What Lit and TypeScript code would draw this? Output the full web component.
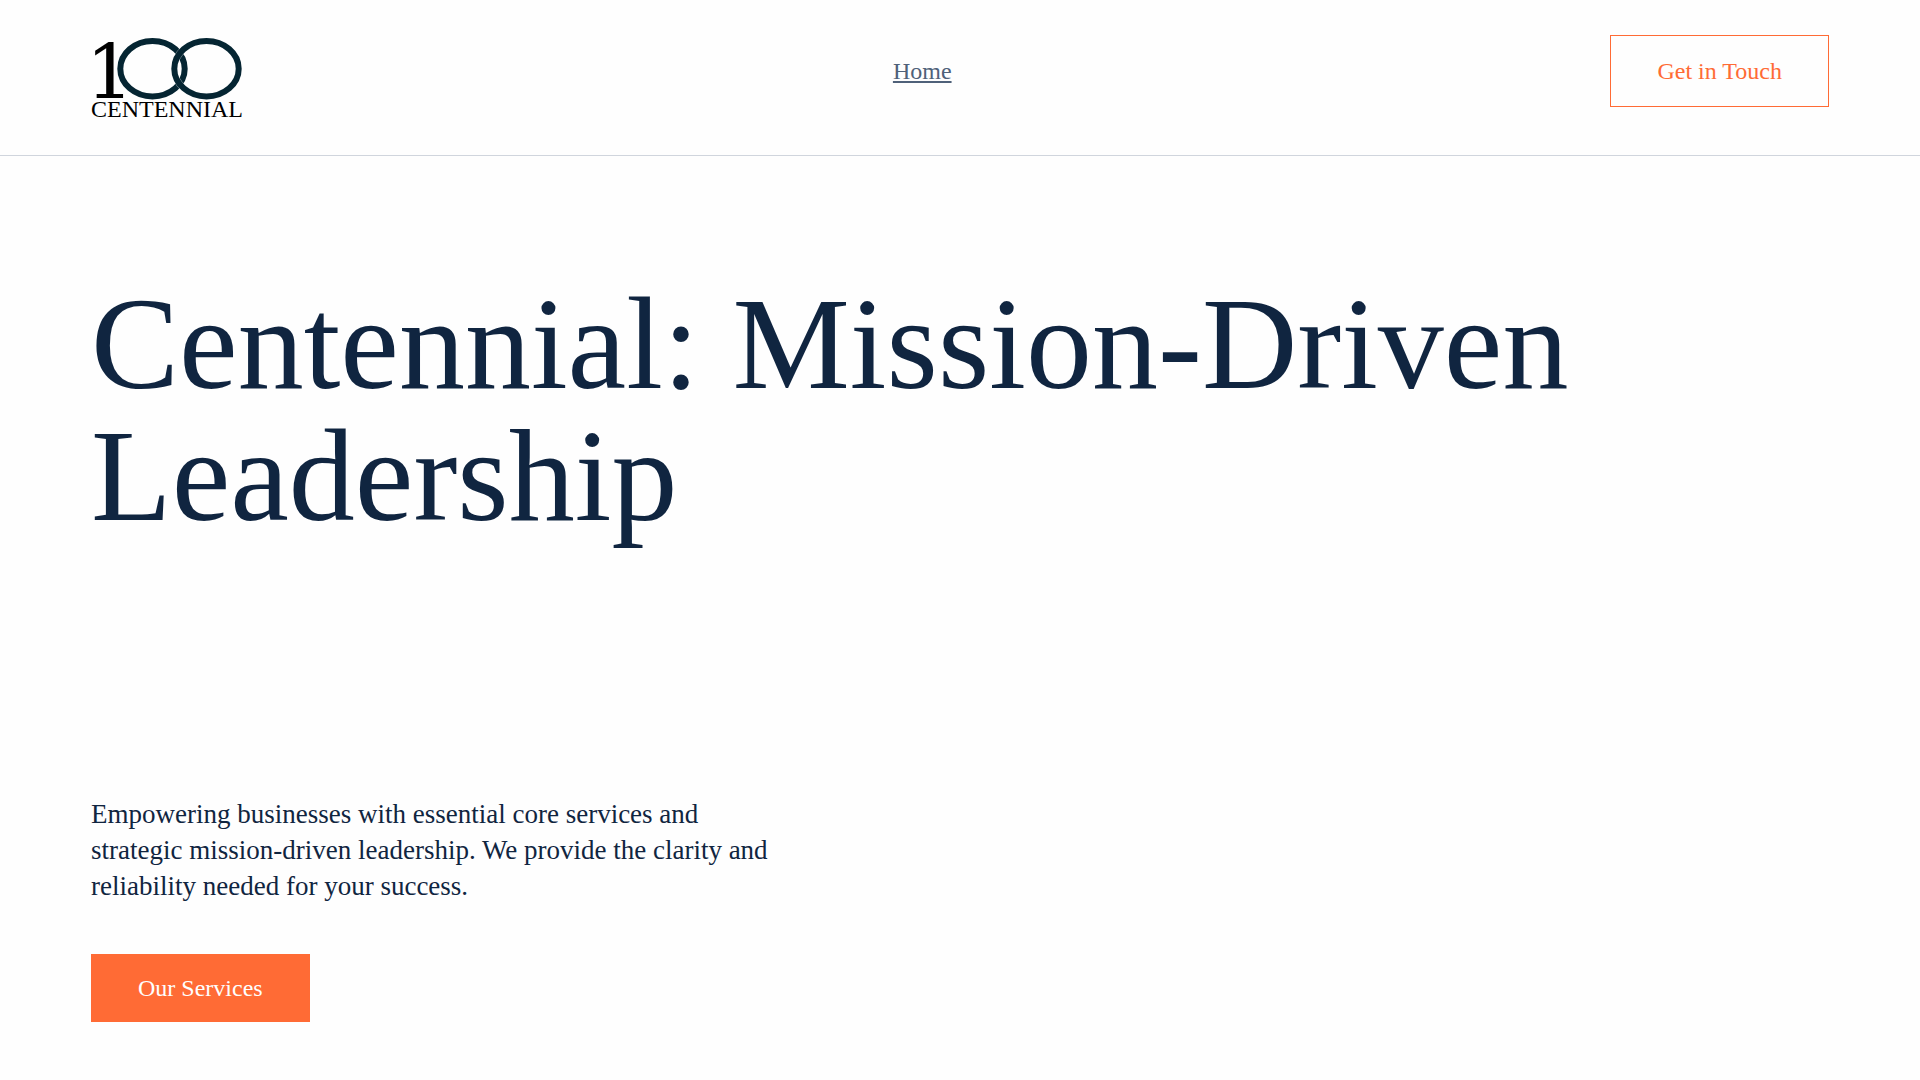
import { LitElement, html, css } from "lit";
import { customElement } from "lit/decorators.js";

@customElement("centennial-logo")
class CentennialLogo extends LitElement {
  static styles = css`
    :host { display: block; }
    .mark { display: block; width: 152px; height: 85px; overflow: visible; }
    .ring { fill: none; stroke: #052532; stroke-width: 6; }
    .gap { fill: none; stroke: #fefefe; stroke-width: 7; opacity: 0.5; }
    .one { font: 75px "DejaVu Serif", serif; }
    .name { font: 24px "Liberation Serif", serif; }
  `;

  render() {
    return html`
      <svg class="mark" viewBox="0 0 152 85" role="img" aria-label="100 Centennial">
        <text>
          <tspan class="one" x="-5" y="63">1</tspan><tspan class="name" x="0" y="82">CENTENNIAL</tspan>
        </text>
        <ellipse class="ring" cx="61.5" cy="33.7" rx="32.2" ry="27.7" />
        <ellipse class="gap" cx="115.5" cy="33.7" rx="32.2" ry="27.7" />
        <ellipse class="ring" cx="115.5" cy="33.7" rx="32.2" ry="27.7" />
      </svg>
    `;
  }
}

@customElement("app-root")
class AppRoot extends LitElement {
  static styles = css`
    :host {
      display: block;
      min-height: 100vh;
      background: #fefefe;
      color: #102540;
      font-family: "Liberation Serif", "Times New Roman", serif;
      font-size: 24px;
      line-height: 28px;
    }
    .header {
      display: flex;
      justify-content: space-between;
      align-items: flex-start;
      padding: 35px 91px;
      border-bottom: 1px solid #d0d5dd;
    }
    .home { display: block; color: #000; }
    .nav { display: flex; align-items: center; height: 72px; padding-right: 9px; }
    .link { color: #4f6179; text-decoration: underline; }
    .button {
      box-sizing: border-box;
      padding: 20px 46px;
      border: 1px solid #ff6b35;
      border-radius: 0;
      background: transparent;
      color: #ff6b35;
      font: inherit;
      line-height: 30px;
      cursor: pointer;
    }
    .filled { padding: 18px 46px; background: #ff6b35; color: #fefefe; }
    .hero { padding: 122px 91px 58px; }
    .title { margin: 0 0 254px; font-size: 132px; line-height: 132px; font-weight: 400; }
    .lead { max-width: 700px; margin: 0 0 50px; font-size: 27px; line-height: 36px; }
  `;

  render() {
    return html`
      <header class="header">
        <a class="home" href="#"><centennial-logo></centennial-logo></a>
        <nav class="nav"><a class="link" href="#">Home</a></nav>
        <button class="button" type="button">Get in Touch</button>
      </header>
      <main class="hero">
        <h1 class="title">Centennial: Mission-Driven Leadership</h1>
        <p class="lead">
          Empowering businesses with essential core services and strategic
          mission-driven leadership. We provide the clarity and reliability
          needed for your success.
        </p>
        <button class="button filled" type="button">Our Services</button>
      </main>
    `;
  }
}
